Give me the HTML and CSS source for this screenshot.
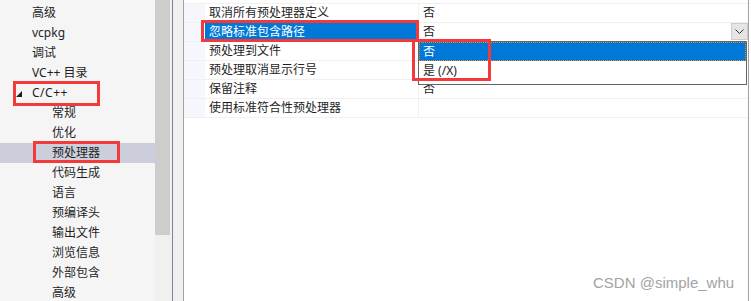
FILE: index.html
```html
<!DOCTYPE html>
<html lang="zh-CN">
<head>
    <meta charset="UTF-8">
    <title>C/C++ 预处理器</title>
    <link rel="stylesheet" href="styles.css">
</head>
<body>
    <div class="window">
        <ul class="tree">
            <li>高级</li>
            <li>vcpkg</li>
            <li>调试</li>
            <li>VC++ 目录</li>
            <li class="open">
                <svg class="arrow" width="6" height="6" viewBox="0 0 6 6"><polygon points="6,0 6,6 0,6" fill="#1e1e1e"/></svg>C/C++
            </li>
            <li class="child">常规</li>
            <li class="child">优化</li>
            <li class="child selected">预处理器</li>
            <li class="child">代码生成</li>
            <li class="child">语言</li>
            <li class="child">预编译头</li>
            <li class="child">输出文件</li>
            <li class="child">浏览信息</li>
            <li class="child">外部包含</li>
            <li class="child">高级</li>
        </ul>
        <div class="scrollbar"><div class="thumb"></div></div>
        <div class="splitter"></div>

        <div class="props">
            <div class="grid">
                <div class="row">
                    <div class="gutter"></div>
                    <div class="name">取消所有预处理器定义</div>
                    <div class="value">否</div>
                </div>
                <div class="row active">
                    <div class="gutter"></div>
                    <div class="name">忽略标准包含路径</div>
                    <div class="value">否<span class="combo-btn"><svg width="9" height="5" viewBox="0 0 9 5"><polyline points="0.5,0.5 4.5,4.5 8.5,0.5" fill="none" stroke="#333" stroke-width="1"/></svg></span></div>
                </div>
                <div class="row">
                    <div class="gutter"></div>
                    <div class="name">预处理到文件</div>
                    <div class="value"></div>
                </div>
                <div class="row">
                    <div class="gutter"></div>
                    <div class="name">预处理取消显示行号</div>
                    <div class="value"></div>
                </div>
                <div class="row">
                    <div class="gutter"></div>
                    <div class="name">保留注释</div>
                    <div class="value">否</div>
                </div>
                <div class="row">
                    <div class="gutter"></div>
                    <div class="name">使用标准符合性预处理器</div>
                    <div class="value"></div>
                </div>
            </div>

            <ul class="dropdown">
                <li class="picked">否</li>
                <li>是 (/X)</li>
            </ul>
        </div>
        <div class="edge"></div>

        <div class="mark mark-cpp"></div>
        <div class="mark mark-pre"></div>
        <div class="mark mark-row"></div>
        <div class="mark mark-list"></div>

        <div class="watermark">CSDN @simple_whu</div>
    </div>
</body>
</html>
```

FILE: styles.css
```css
html, body {
    margin: 0;
    padding: 0;
    background: #fff;
}
.window {
    position: relative;
    display: flex;
    width: 751px;
    height: 301px;
    overflow: hidden;
    font-family: "Noto Sans", "Noto Sans CJK SC", sans-serif;
    font-size: 12px;
    color: #1e1e1e;
}
ul {
    list-style: none;
    margin: 0;
    padding: 0;
}

/* left tree */
.tree {
    flex: 0 0 155px;
    background: #f5f5f5;
    padding-top: 3px;
}
.tree li {
    height: 20px;
    line-height: 20px;
    padding-left: 32px;
    white-space: nowrap;
}
.tree li.open {
    position: relative;
    letter-spacing: 0.5px;
}
.tree .arrow {
    position: absolute;
    left: 16px;
    top: 8px;
}
.tree li.child {
    padding-left: 52px;
}
.tree li.selected {
    background: #cccedb;
}
.scrollbar {
    flex: 0 0 17px;
    background: #f0f0f0;
}
.thumb {
    width: 15px;
    height: 235px;
    background: #cdcdcd;
}
.splitter {
    flex: 0 0 10px;
    background: #f0f0f0;
    border-left: 1px solid #7d8596;
    border-right: 1px solid #a0a0a0;
}

/* property grid */
.props {
    position: relative;
    flex: 0 0 564px;
    background: #fff;
    padding-top: 3px;
}
.edge {
    flex: 0 0 1px;
    background: #a0a0a0;
}
.row {
    display: flex;
    height: 18px;
    border-top: 1px solid #f0f0f0;
}
.row:last-child {
    border-bottom: 1px solid #f0f0f0;
}
.gutter {
    flex: 0 0 21px;
    background: #f5f7fc;
}
.name {
    flex: 0 0 209px;
    padding-left: 4px;
    line-height: 18px;
    border-right: 1px solid #f0f0f0;
    white-space: nowrap;
}
.value {
    position: relative;
    flex: 1;
    padding-left: 4px;
    line-height: 18px;
}
.row.active .name {
    background: #0078d7;
    color: #fff;
}
.combo-btn {
    position: absolute;
    right: 0;
    top: 0;
    width: 15px;
    height: 15px;
    background: #e5e5e5;
    border: 1px solid #cccccc;
    display: flex;
    align-items: center;
    justify-content: center;
}

.dropdown {
    position: absolute;
    left: 234px;
    top: 41px;
    width: 327px;
    height: 42px;
    background: #fff;
    border: 1px solid #646464;
}
.dropdown li {
    height: 19px;
    line-height: 19px;
    padding-left: 4px;
}
.dropdown li.picked {
    background: #0078d7;
    color: #fff;
    outline: 1px dotted #e08a2c;
    outline-offset: -1px;
}

/* annotation boxes */
.mark {
    position: absolute;
    border: 3px solid #f23a3a;
}
.mark-cpp {
    left: 13px;
    top: 81px;
    width: 81px;
    height: 19px;
}
.mark-pre {
    left: 33px;
    top: 141px;
    width: 81px;
    height: 16px;
}
.mark-row {
    left: 201px;
    top: 20px;
    width: 212px;
    height: 16px;
}
.mark-list {
    left: 412px;
    top: 39px;
    width: 73px;
    height: 36px;
}

.watermark {
    position: absolute;
    left: 593px;
    top: 274px;
    font-family: "Liberation Sans", Arial, sans-serif;
    font-size: 15px;
    color: #a3a3a3;
}
```
